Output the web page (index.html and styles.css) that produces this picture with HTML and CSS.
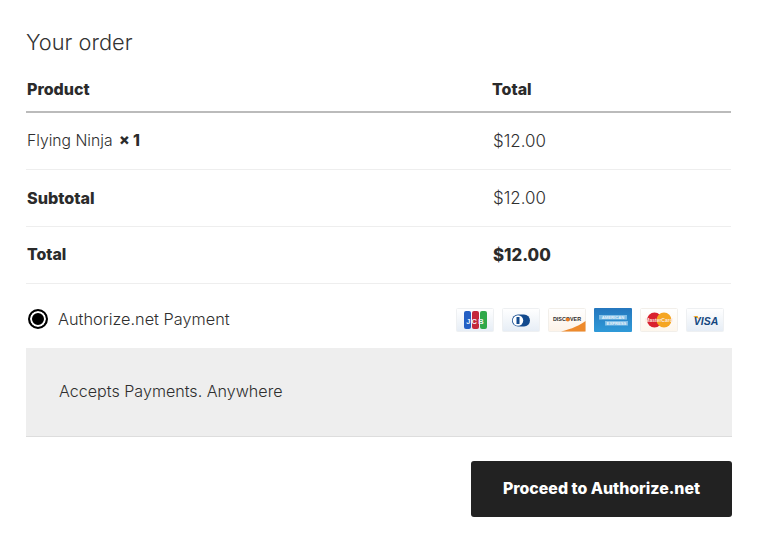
FILE: index.html
```html
<!DOCTYPE html>
<html lang="en">
<head>
<meta charset="utf-8">
<title>Your order</title>
<link rel="stylesheet" href="styles.css">
</head>
<body>
<main class="checkout">
  <h3 class="title">Your order</h3>
  <table class="order">
    <thead>
      <tr><th class="col-product">Product</th><th class="col-total">Total</th></tr>
    </thead>
    <tbody>
      <tr><td>Flying Ninja <strong class="qty">× 1</strong></td><td class="amount">$12.00</td></tr>
      <tr><th>Subtotal</th><td class="amount">$12.00</td></tr>
      <tr><th class="total-label">Total</th><td class="amount"><strong>$12.00</strong></td></tr>
    </tbody>
  </table>
  <div class="method">
    <label class="method-label"><span class="radio"></span>Authorize.net Payment</label>
    <div class="cards">
      <svg class="card" viewBox="0 0 38 24"><defs><linearGradient id="g1" x1="0" y1="0" x2="0" y2="1"><stop offset="0" stop-color="#fff"/><stop offset="1" stop-color="#e6edf5"/></linearGradient></defs><rect x=".5" y=".5" width="37" height="23" rx="1" fill="url(#g1)" stroke="#eef0f2"/><rect x="8" y="3" width="7" height="18" rx="2" fill="#2460c4"/><rect x="16" y="3" width="7" height="18" rx="2" fill="#c4283c"/><rect x="24" y="3" width="7" height="18" rx="2" fill="#2fa84a"/><text x="19.5" y="15.5" class="t-jcb">JCB</text></svg>
      <svg class="card" viewBox="0 0 38 24"><rect x=".5" y=".5" width="37" height="23" rx="1" fill="url(#g1)" stroke="#eef0f2"/><rect x="10" y="6.5" width="18" height="12" rx="6" fill="#134a8e"/><circle cx="16" cy="12.5" r="5.2" fill="#fff"/><rect x="14.5" y="9" width="3" height="7" fill="#134a8e"/></svg>
      <svg class="card" viewBox="0 0 38 24"><defs><linearGradient id="g3" x1="0" y1="0" x2="0" y2="1"><stop offset="0" stop-color="#fff"/><stop offset="1" stop-color="#fdf3e8"/></linearGradient></defs><rect x=".5" y=".5" width="37" height="23" rx="1" fill="url(#g3)" stroke="#f2efea"/><path d="M13 23.5C24 21 32 17 37.5 13V23.5Z" fill="#ee8a2c"/><text x="19" y="13.4" class="t-disc">DISCOVER</text><circle cx="19.8" cy="11.6" r="1.9" fill="#ee7a1c"/></svg>
      <svg class="card" viewBox="0 0 38 24"><defs><linearGradient id="g4" x1="0" y1="0" x2="0" y2="1"><stop offset="0" stop-color="#2577be"/><stop offset="1" stop-color="#2f9ad8"/></linearGradient></defs><rect width="38" height="24" rx="1" fill="url(#g4)"/><rect x="5" y="7" width="28" height="4.6" fill="#7fbde6"/><rect x="11" y="13" width="23" height="4.6" fill="#7fbde6"/><text x="19" y="10.7" class="t-amex">AMERICAN</text><text x="22.5" y="16.7" class="t-amex">EXPRESS</text></svg>
      <svg class="card" viewBox="0 0 38 24"><defs><linearGradient id="g5" x1="0" y1="0" x2="0" y2="1"><stop offset="0" stop-color="#fff"/><stop offset="1" stop-color="#fdf6ec"/></linearGradient></defs><rect x=".5" y=".5" width="37" height="23" rx="1" fill="url(#g5)" stroke="#f2efea"/><circle cx="14.5" cy="12" r="7.5" fill="#d9222f"/><circle cx="24" cy="12" r="7.5" fill="#f5a623"/><text x="19" y="13.8" class="t-mc">MasterCard</text></svg>
      <svg class="card" viewBox="0 0 38 24"><rect x=".5" y=".5" width="37" height="23" rx="1" fill="url(#g1)" stroke="#eef0f2"/><path d="M7 8h4.5l1.5 3z" fill="#f0a21e"/><text x="20" y="16.5" class="t-visa">VISA</text></svg>
    </div>
  </div>
  <div class="box">Accepts Payments. Anywhere</div>
  <div class="actions"><button class="proceed" type="button">Proceed to Authorize.net</button></div>
</main>
</body>
</html>
```
FILE: styles.css
```css
* { box-sizing: border-box; }
html, body { margin: 0; background: #fff; }
body {
  font-family: "Inter", "Liberation Sans", sans-serif;
  font-size: 16px;
  font-weight: 300;
  color: #2f2f2f;
}
.checkout { width: 758px; height: 544px; padding: 28px 26px 0; overflow: hidden; }
.title { margin: 0; font-size: 21.8px; line-height: 28px; font-weight: 300; color: #333; height: 28px; }
.order { width: 705px; margin-top: 13px; border-collapse: collapse; table-layout: fixed; font-size: 15.7px; }
.order th, .order td { padding: 0 0 0 1px; text-align: left; height: 57px; border-bottom: 1px solid #eee; }
.order th { font-weight: 800; color: #2b2b2b; font-size: 16.2px; }
.order thead th { height: 43px; border-bottom: 2px solid #bbb; padding-top: 0; padding-bottom: 2px; font-size: 16px; }
.order .total-label { font-size: 15.9px; }
.col-product { width: 465px; }
.order .col-total { padding-left: 1px; }
.order .amount { padding-left: 2px; font-size: 16.9px; }
.qty { font-weight: 800; color: #2b2b2b; margin-left: 2px; }
.amount strong { font-weight: 800; color: #2b2b2b; font-size: 16.8px; }
.method { display: flex; align-items: center; justify-content: space-between; height: 65px; padding: 6px 8px 0 2px; font-size: 16.3px; margin-bottom: -1px; }
.method-label { display: flex; align-items: center; gap: 10px; }
.radio { width: 20px; height: 20px; border: 2px solid #000; border-radius: 50%; background: #000; box-shadow: inset 0 0 0 2px #fff; }
.cards { display: flex; gap: 8px; margin-top: 2px; }
.card { width: 38px; height: 24px; display: block; }
.card text { text-anchor: middle; font-family: "Liberation Sans", sans-serif; font-weight: 700; }
.t-jcb { font-size: 7.5px; fill: #eef3f8; letter-spacing: 1.2px; }
.t-disc { font-size: 5.4px; fill: #2e2e2e; }
.t-amex { font-size: 4.2px; fill: #e8f3fb; }
.t-mc { font-size: 5px; fill: #fbe9e0; }
.t-visa { font-size: 10.5px; font-style: italic; fill: #14477f; }
.box { height: 89px; padding: 33px 33px 0; background: #eee; border-bottom: 1px solid #ddd; width: 706px; font-size: 16.1px; line-height: 20px; }
.actions { display: flex; justify-content: flex-end; width: 706px; margin-top: 24px; }
.proceed { width: 261px; height: 56px; border: 0; border-radius: 3px; background: #222; color: #fff; font: 800 15.9px "Inter", "Liberation Sans", sans-serif; }
```
